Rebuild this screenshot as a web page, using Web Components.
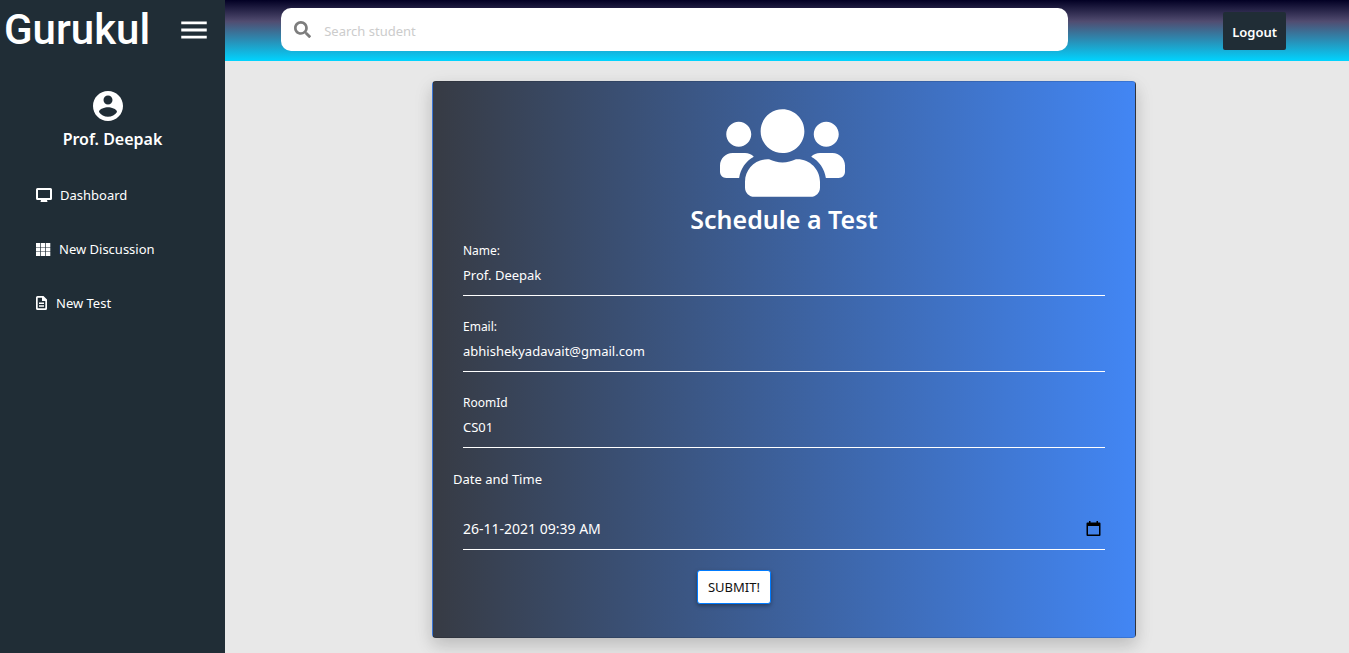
<!DOCTYPE html>
<html lang="en">
<head>
<meta charset="utf-8">
<title>Gurukul</title>
<style>
html,body{margin:0;min-height:100vh;background:#e8e8e8}
body{font:13px/20px "Noto Sans","Open Sans",sans-serif;color:#fff}
</style>
</head>
<body>
<app-shell>
  <side-bar slot="side" brand="Gurukul" user="Prof. Deepak">
    <nav-item icon="desktop">Dashboard</nav-item>
    <nav-item icon="grid">New Discussion</nav-item>
    <nav-item icon="file">New Test</nav-item>
  </side-bar>
  <top-bar slot="top"></top-bar>
  <test-card heading="Schedule a Test">
    <form-field label="Name:" value="Prof. Deepak"></form-field>
    <form-field label="Email:" value="abhishekyadavait@gmail.com"></form-field>
    <form-field label="RoomId" value="CS01"></form-field>
    <date-field label="Date and Time" value="26-11-2021 09:39 AM"></date-field>
  </test-card>
</app-shell>
<script>
const define = (name, render) => customElements.define(name, class extends HTMLElement {
  connectedCallback() {
    if (this.shadowRoot) return;
    this.attachShadow({ mode: 'open' }).innerHTML =
      '<style>*{box-sizing:border-box}:host{display:block;box-sizing:border-box}button,input{font:inherit;color:inherit;margin:0}svg{display:block;fill:currentColor}</style>' + render(this);
  }
});

define('app-shell', () => `
<style>
:host{display:grid;grid-template-columns:225px minmax(0,1fr);min-height:100vh}
main{padding:20px 6px 15px 0}
</style>
<slot name="side"></slot>
<div><slot name="top"></slot><main><slot></slot></main></div>`);

define('side-bar', el => `
<style>
:host{background:#202d36}
header{display:flex;align-items:center;justify-content:space-between;height:60px;padding:0 14px 0 4px}
h1{margin:0;font:500 42px/56px Roboto,sans-serif}
button{border:0;background:none;padding:0}
.user{display:flex;flex-direction:column;align-items:center;padding-top:28px}
.user svg{margin-right:9px}
.user p{margin:0;font-size:16px;font-weight:600;line-height:30px}
nav{display:flex;flex-direction:column;gap:34px;padding:31px 36px}
</style>
<header><h1>${el.getAttribute('brand')}</h1>
<button aria-label="Toggle menu"><svg width="34" height="34" viewBox="0 0 24 24"><path d="M3 18h18v-2H3v2zm0-5h18v-2H3v2zm0-7v2h18V6H3z"/></svg></button></header>
<div class="user">
<svg width="36" height="36" viewBox="0 0 24 24"><path d="M12 2C6.480 2 2 6.480 2 12s4.480 10 10 10 10-4.480 10-10S17.520 2 12 2zm0 3c1.660 0 3 1.340 3 3s-1.340 3-3 3-3-1.340-3-3 1.340-3 3-3zm0 14.200c-2.500 0-4.710-1.280-6-3.220.030-1.990 4-3.080 6-3.080 1.990 0 5.970 1.090 6 3.080-1.290 1.940-3.500 3.220-6 3.220z"/></svg>
<p>${el.getAttribute('user')}</p></div>
<nav><slot></slot></nav>`);

const icons = {
  desktop: '<svg width="16" height="14" viewBox="0 0 16 14"><path fill-rule="evenodd" d="M1.500 0h13A1.500 1.500 0 0 1 16 1.500v9a1.500 1.500 0 0 1-1.500 1.500H11l.5 2h-7l.5-2H1.500A1.500 1.500 0 0 1 0 10.500v-9A1.500 1.500 0 0 1 1.500 0zM2 2v8h12V2z"/></svg>',
  grid: '<svg width="15" height="13" viewBox="0 0 15 13"><path d="M0 0h4.300v3.900H0zm5 0h4.300v3.900H5zm5 0h4.300v3.900H10zM0 4.500h4.300v3.900H0zm5 0h4.300v3.900H5zm5 0h4.300v3.900H10zM0 9h4.300v3.900H0zm5 0h4.300v3.900H5zm5 0h4.300v3.900H10z"/></svg>',
  file: '<svg width="12" height="14" viewBox="0 0 12 14"><path fill-rule="evenodd" d="M1.500 0H7.500L11 3.500v9A1.500 1.500 0 0 1 9.500 14h-8A1.500 1.500 0 0 1 0 12.500v-11A1.500 1.500 0 0 1 1.500 0zM1.700 1.700v10.600h7.600V5H6V1.700zM3 6.500h5V8H3zm0 2.700h5v1.500H3z"/></svg>'
};
define('nav-item', el => `
<style>a{display:flex;align-items:center;gap:8px;color:inherit;text-decoration:none}</style>
<a href="#">${icons[el.getAttribute('icon')]}<span><slot></slot></span></a>`);

define('top-bar', () => `
<style>
:host{background:linear-gradient(180deg,#020024 0%,#514c70 35%,#00d4ff 100%)}
header{display:flex;justify-content:space-between;align-items:flex-start;height:61px;padding-top:8px}
label{display:flex;align-items:center;gap:13px;width:70%;height:43px;margin-left:5%;padding:0 13px;border-radius:10px;background:#fff;color:#7d7d7d}
input{flex:1;min-width:0;border:0;outline:0;padding:2px 0 0;background:none;color:#333}
input::placeholder{color:#ccc;opacity:1}
button{margin:4px 63px 0 0;height:38px;padding:2px 9px 0;border:0;border-radius:2px;background:#202d36;font-weight:600}
</style>
<header>
<label><svg width="17" height="17" viewBox="0 0 512 512"><path d="M505 442.700L405.300 343c-4.500-4.500-10.600-7-17-7H372c27.600-35.300 44-79.700 44-128C416 93.100 322.900 0 208 0S0 93.100 0 208s93.100 208 208 208c48.300 0 92.700-16.400 128-44v16.300c0 6.400 2.500 12.500 7 17l99.700 99.700c9.400 9.400 24.600 9.400 33.900 0l28.300-28.300c9.400-9.400 9.400-24.600.1-34zM208 336c-70.700 0-128-57.200-128-128 0-70.700 57.200-128 128-128 70.700 0 128 57.200 128 128 0 70.700-57.200 128-128 128z"/></svg>
<input type="search" aria-label="Search student" placeholder="Search student"></label>
<button>Logout</button>
</header>`);

define('test-card', el => `
<style>
:host{max-width:704px;margin:0 auto;border:1px solid rgba(0,0,0,.125);border-radius:4px;background:linear-gradient(to right,#373b44,#4286f4);box-shadow:0 8px 16px rgba(0,0,0,.1),0 6px 20px rgba(0,0,0,.1)}
form{padding:21px 30px 33px}
header{display:flex;flex-direction:column;align-items:center;margin-bottom:4px}
header svg{margin-right:3px}
h2{margin:0;font-size:25px;line-height:32px;font-weight:600}
.fields{display:grid;gap:19px}
.actions{display:flex;justify-content:center;padding:20px 100px 0 0}
button{height:34px;padding:0 10px;border:1px solid #007bff;border-radius:3px;background:#fff;color:#111;font-size:13px;box-shadow:0 2px 4px rgba(0,0,0,.35)}
</style>
<form onsubmit="return false"><header>
<svg width="125" height="100" viewBox="0 0 640 512"><path d="M96 224c35.300 0 64-28.700 64-64s-28.700-64-64-64-64 28.700-64 64 28.700 64 64 64zm448 0c35.300 0 64-28.700 64-64s-28.700-64-64-64-64 28.700-64 64 28.700 64 64 64zm32 32h-64c-17.600 0-33.500 7.100-45.100 18.600 40.300 22.100 68.900 62 75.100 109.400h66c17.700 0 32-14.300 32-32v-32c0-35.300-28.700-64-64-64zm-256 0c61.900 0 112-50.100 112-112S381.900 32 320 32 208 82.100 208 144s50.100 112 112 112zm76.800 32h-8.300c-20.800 10-43.900 16-68.500 16s-47.600-6-68.500-16h-8.300C179.600 288 128 339.600 128 403.200V432c0 26.500 21.500 48 48 48h288c26.500 0 48-21.500 48-48v-28.800c0-63.600-51.600-115.200-115.200-115.200zm-223.700-13.400C161.500 263.100 145.600 256 128 256H64c-35.300 0-64 28.700-64 64v32c0 17.700 14.300 32 32 32h65.900c6.300-47.400 34.900-87.300 75.200-109.400z"/></svg>
<h2>${el.getAttribute('heading')}</h2></header>
<div class="fields"><slot></slot></div>
<div class="actions"><button type="submit">SUBMIT!</button></div></form>`);

define('form-field', el => `
<style>
label{display:block;line-height:24px;font-size:12px}
input{display:block;width:100%;height:33px;padding:0 0 8px;border:0;border-bottom:1px solid #fff;outline:0;background:none}
</style>
<label for="f">${el.getAttribute('label')}</label>
<input id="f" type="text" value="${el.getAttribute('value')}">`);

define('date-field', el => `
<style>
label{display:block;line-height:24px;margin:0 0 26px -10px}
div{display:flex;align-items:center;height:33px;padding-bottom:8px;border-bottom:1px solid #fff}
input{flex:1;min-width:0;border:0;padding:0;outline:0;background:none;font-size:14px}
button{border:0;padding:0 4px 0 0;background:none;color:#000}
</style>
<label for="d">${el.getAttribute('label')}</label>
<div><input id="d" type="text" value="${el.getAttribute('value')}">
<button type="button" aria-label="Open calendar"><svg width="15" height="16" viewBox="0 0 15 16"><path fill-rule="evenodd" d="M3 0h1.500v1.500h6V0H12v1.500h1.500A1 1 0 0 1 14.500 2.500V14a1 1 0 0 1-1 1h-12a1 1 0 0 1-1-1V2.500a1 1 0 0 1 1-1H3zM2 5v8.500h11V5z"/></svg></button></div>`);
</script>
</body>
</html>
